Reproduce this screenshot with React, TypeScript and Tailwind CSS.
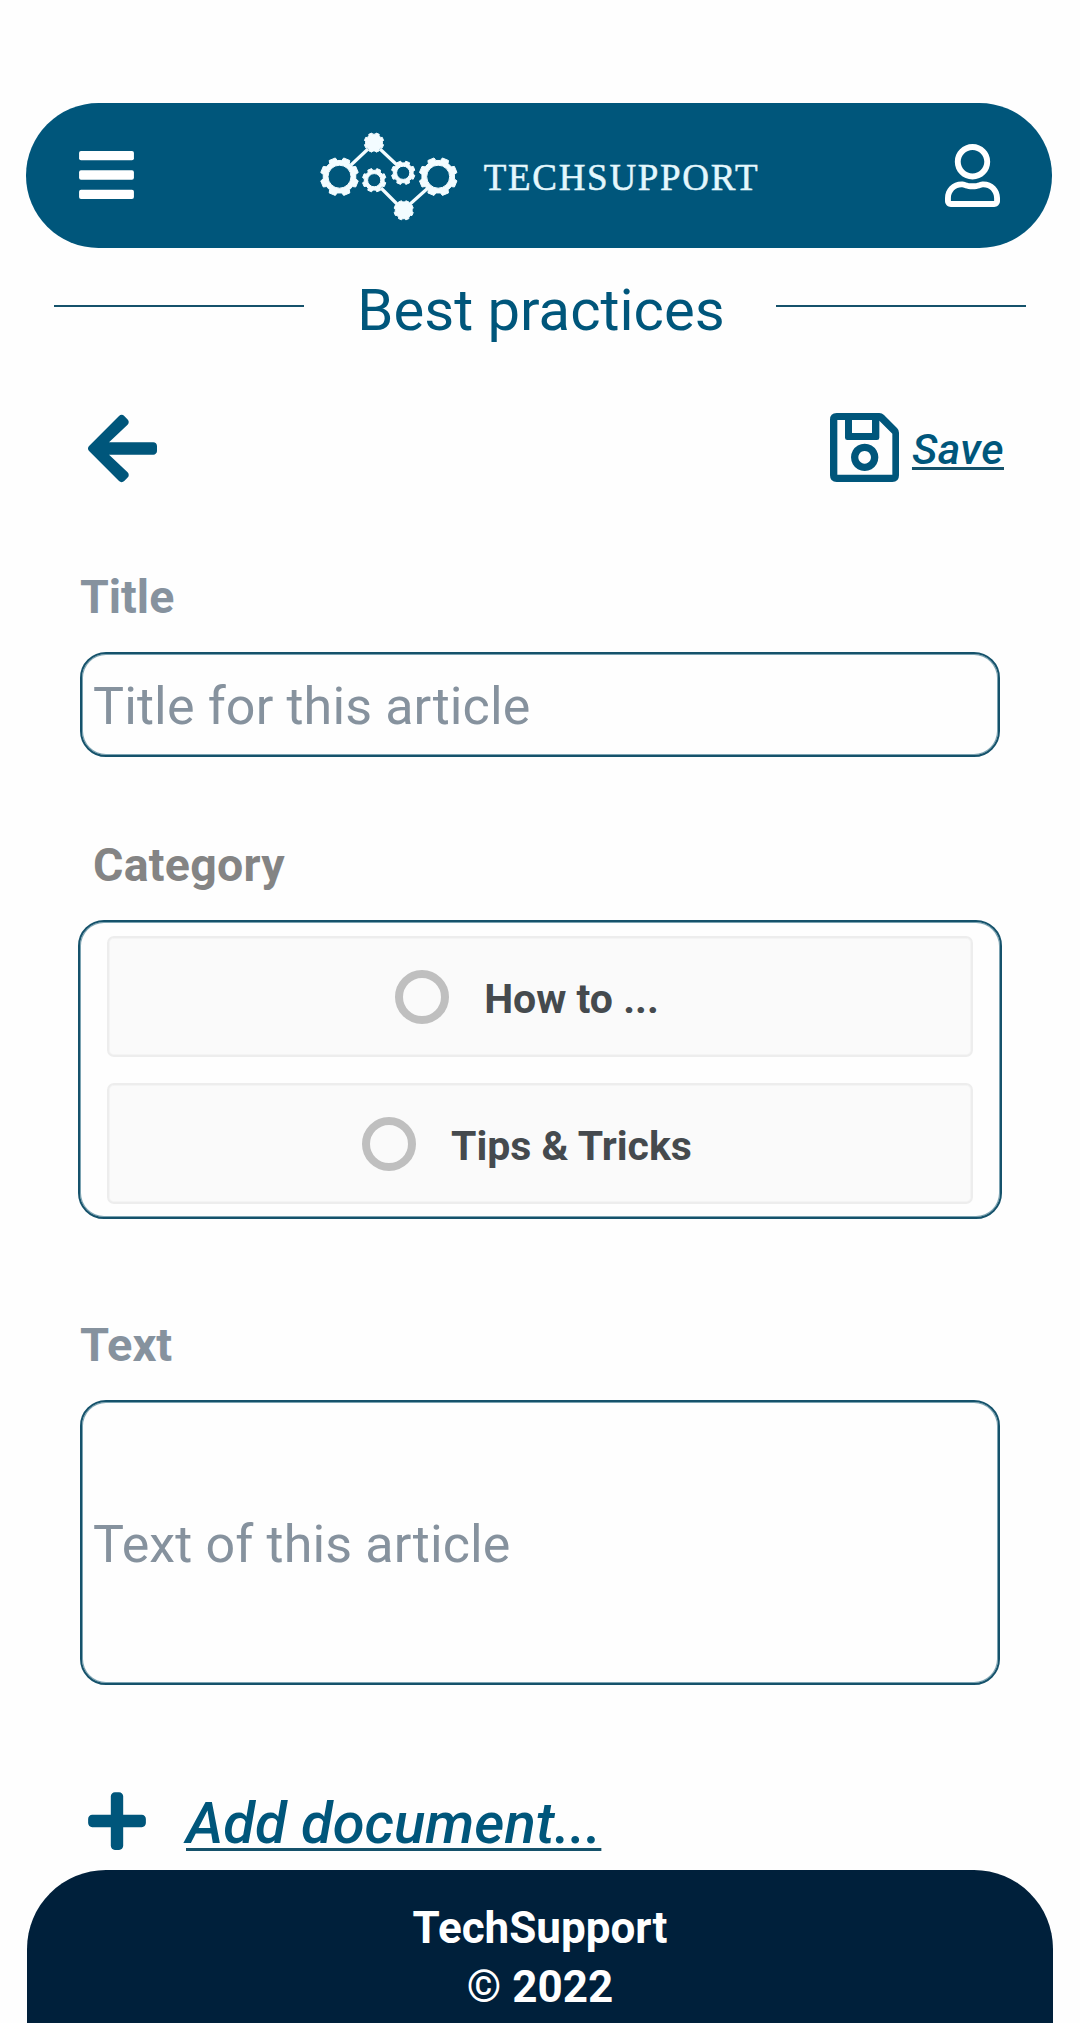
import { FaArrowLeft, FaPlus, FaRegUser } from "react-icons/fa";

const BRAND = "#00567b";

// Outline of a toothed wheel, with an optional round hole cut out by the even-odd rule.
function gearPath(cx: number, cy: number, outer: number, body: number, hole: number) {
  const teeth = 8;
  const step = (Math.PI * 2) / teeth;
  const corners: [number, number][] = [
    [body, -0.32],
    [outer, -0.22],
    [outer, 0.22],
    [body, 0.32],
  ];
  const pts: string[] = [];
  for (let i = 0; i < teeth; i++) {
    const a = (i + 0.5) * step;
    for (const [r, o] of corners) {
      pts.push(`${(cx + r * Math.cos(a + o * step)).toFixed(2)} ${(cy + r * Math.sin(a + o * step)).toFixed(2)}`);
    }
  }
  let d = `M${pts.join("L")}Z`;
  if (hole > 0) {
    d += `M${cx - hole} ${cy}a${hole} ${hole} 0 1 0 ${hole * 2} 0a${hole} ${hole} 0 1 0 ${-hole * 2} 0Z`;
  }
  return d;
}

function Logo() {
  return (
    <svg viewBox="320 132 138 90" className="mt-[2px] h-[90px] w-[138px] shrink-0" aria-hidden="true">
      <path d="M351 165L368 149M380 149L397 165M381 188L398 205M409 205L428 188" stroke="#f3fcff" strokeWidth="3.2" />
      <g fill="#f3fcff" stroke="#f3fcff" strokeWidth="1" strokeLinejoin="round" fillRule="evenodd">
        <path d={gearPath(339.5, 176.7, 19.2, 16.4, 11.5)} />
        <path d={gearPath(438.2, 176.7, 19.2, 16.4, 11.5)} />
        <path d={gearPath(374.2, 180.2, 11.9, 10, 6.6)} />
        <path d={gearPath(403.2, 172.8, 11.9, 10, 6.6)} />
        <path d={gearPath(374, 142.6, 9.8, 8.5, 0)} />
        <path d={gearPath(403.7, 210.3, 9.8, 8.5, 0)} />
      </g>
    </svg>
  );
}

function MenuIcon() {
  return (
    <svg viewBox="0 60 448 392" className="-mt-[1px] h-[48px] w-[55px]" fill="#fff" aria-hidden="true">
      <rect y="60" width="448" height="76" rx="16" />
      <rect y="218" width="448" height="76" rx="16" />
      <rect y="376" width="448" height="76" rx="16" />
    </svg>
  );
}

function SaveIcon() {
  return (
    <svg viewBox="0 0 207 207" className="h-[69px] w-[69px]" fill={BRAND} fillRule="evenodd" aria-hidden="true">
      <path d="M20 0H148Q156 0 162 6L201 45Q207 51 207 59V187Q207 207 187 207H20Q0 207 0 187V20Q0 0 20 0ZM22 21V185H187V62L148 23V74Q148 81 141 81H52Q45 81 45 74V21ZM66 21V60H126V21Z" />
      <path d="M104 92a41 41 0 1 0 .1 0ZM104 114a19 19 0 1 1 -.1 0Z" />
    </svg>
  );
}

function Option({ label }: { label: string }) {
  return (
    <div className="flex h-[121px] shrink-0 items-center justify-center rounded-[7px] border-2 border-[#ededed] bg-[#fafafa] pr-[26px] shadow-[inset_0_0_0_1px_#f4f4f4]">
      <span className="h-[54px] w-[54px] rounded-full border-[8px] border-[#bfbfbf]" />
      <span className="mt-[6px] ml-[35px] text-[41px] leading-none font-bold whitespace-nowrap text-[#454a4e]">{label}</span>
    </div>
  );
}

export default function App() {
  return (
    <div className="flex h-[2023px] w-[1080px] flex-col overflow-hidden bg-[#fefefe] pt-[103px] font-['Roboto',sans-serif]">
      <header className="mr-[28px] ml-[26px] flex h-[145px] shrink-0 items-center justify-between rounded-full bg-[#00567b] pr-[52px] pl-[53px]">
        <MenuIcon />
        <div className="flex items-center gap-[26px]">
          <Logo />
          <span className="mt-[5px] font-['Liberation_Serif',serif] text-[37px] tracking-[1.7px] text-[#e4f7fd] [-webkit-text-stroke:0.5px_#e4f7fd]">
            TECHSUPPORT
          </span>
        </div>
        <FaRegUser className="h-[63px] w-[55px] text-white" />
      </header>

      <div className="mt-[33px] flex h-[58px] shrink-0 items-start justify-between px-[54px]">
        <span className="mt-[24px] h-[2px] w-[250px] bg-[#15526b]" />
        <h1 className="ml-[2px] text-[58px] leading-none whitespace-nowrap text-[#00567b]">Best practices</h1>
        <span className="mt-[24px] h-[2px] w-[250px] bg-[#15526b]" />
      </div>

      <div className="mt-[74px] flex h-[69px] shrink-0 items-center justify-between pr-[76px] pl-[88px]">
        <FaArrowLeft className="mt-[2px] h-[79px] w-[69px] text-[#00567b]" />
        <div className="flex items-center">
          <SaveIcon />
          <span className="mt-[3px] ml-[13px] text-[43px] leading-none font-medium tracking-[0.45px] text-[#00567b] italic underline decoration-[#15526b] decoration-3 underline-offset-[3px] [text-decoration-skip-ink:none]">
            Save
          </span>
        </div>
      </div>

      <div className="mt-[92px] flex shrink-0 flex-col px-[80px]">
        <div className="text-[46.5px] leading-[47px] font-bold text-[#86929e]">Title</div>
        <div className="mt-[31px] flex h-[105px] items-center rounded-[26px] border-2 border-[#15526b] pt-[5px] pl-[11px] text-[52px] leading-none tracking-[0.14px] text-[#86929e] shadow-[inset_0_0_0_1px_#7ba3b2]">
          Title for this article
        </div>
      </div>

      <div className="mt-[85px] flex shrink-0 flex-col px-[78px]">
        <div className="ml-[15px] text-[46.5px] leading-[46px] font-bold tracking-[0.25px] text-[#848484]">Category</div>
        <div className="mt-[32px] flex h-[299px] flex-col gap-[26px] rounded-[26px] border-2 border-[#15526b] px-[27px] pt-[14px] shadow-[inset_0_0_0_1px_#7ba3b2]">
          <Option label="How to ..." />
          <Option label="Tips & Tricks" />
        </div>
      </div>

      <div className="mt-[102px] flex shrink-0 flex-col px-[80px]">
        <div className="text-[47px] leading-none font-bold text-[#86929e]">Text</div>
        <div className="mt-[32px] flex h-[285px] items-center rounded-[26px] border-2 border-[#15526b] pt-[5px] pl-[11px] text-[52px] leading-none tracking-[0.14px] text-[#86929e] shadow-[inset_0_0_0_1px_#7ba3b2]">
          Text of this article
        </div>
      </div>

      <div className="mt-[107px] flex h-[58px] shrink-0 items-center pl-[88px]">
        <FaPlus className="h-[66px] w-[58px] text-[#00567b]" />
        <span className="mt-[3px] ml-[40px] text-[58px] leading-none font-medium text-[#00567b] italic underline decoration-[#15526b] decoration-3 underline-offset-[5px] [text-decoration-skip-ink:none]">
          Add document...
        </span>
      </div>

      <footer className="mx-[27px] mt-[20px] flex grow flex-col items-center rounded-t-[79px] bg-[#00203b] pt-[29px] text-[44px] leading-[59px] font-bold text-white">
        <span>TechSupport</span>
        <span>© 2022</span>
      </footer>
    </div>
  );
}
